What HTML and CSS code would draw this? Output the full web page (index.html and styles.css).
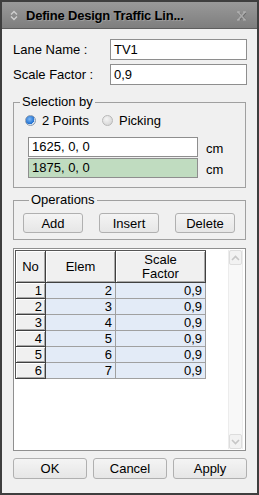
FILE: index.html
```html
<!DOCTYPE html>
<html lang="en">
    <head>
        <meta charset="UTF-8" />
        <title>Define Design Traffic Lane</title>
        <link rel="stylesheet" href="styles.css">
    </head>
    <body>
        <div class="window">
            <div class="titlebar">
                <svg class="title-icon" width="8" height="11" viewBox="0 0 8 11">
                    <path d="M1 4.5 L4 1.5 L7 4.5 M1 6.5 L4 9.5 L7 6.5" fill="none" stroke="#cfcfcf" stroke-width="1.4" />
                </svg>
                <span class="title">Define Design Traffic Lin...</span>
                <svg class="close" width="11" height="10" viewBox="0 0 11 10">
                    <path d="M2 1 L9 9 M9 1 L2 9" stroke="#6a6a6a" stroke-width="2.2" transform="translate(0.5 0.5)" />
                    <path d="M2 1 L9 9 M9 1 L2 9" stroke="#a9a9a9" stroke-width="1.8" />
                    <path d="M1 1 H4 M7 1 H10 M1 9 H4 M7 9 H10" stroke="#b8b8b8" stroke-width="1" />
                </svg>
            </div>
            <div class="content">
                <div class="field-row">
                    <span class="field-label">Lane Name :</span>
                    <div class="text-box">TV1</div>
                </div>
                <div class="field-row">
                    <span class="field-label">Scale Factor :</span>
                    <div class="text-box">0,9</div>
                </div>

                <fieldset class="group selection">
                    <legend>Selection by</legend>
                    <div class="radios">
                        <span class="radio-option"><span class="radio checked"></span>2 Points</span>
                        <span class="radio-option"><span class="radio"></span>Picking</span>
                    </div>
                    <div class="point-rows">
                        <div class="point-row">
                            <div class="text-box point">1625, 0, 0</div>
                            <span class="unit">cm</span>
                        </div>
                        <div class="point-row">
                            <div class="text-box point picked">1875, 0, 0</div>
                            <span class="unit">cm</span>
                        </div>
                    </div>
                </fieldset>

                <fieldset class="group ops">
                    <legend>Operations</legend>
                    <div class="op-buttons">
                        <button class="btn">Add</button>
                        <button class="btn">Insert</button>
                        <button class="btn">Delete</button>
                    </div>
                </fieldset>

                <div class="grid-box">
                    <div class="grid">
                        <div class="head">No</div>
                        <div class="head">Elem</div>
                        <div class="head">Scale<br>Factor</div>

                        <div class="num">1</div><div class="cell">2</div><div class="cell">0,9</div>
                        <div class="num">2</div><div class="cell">3</div><div class="cell">0,9</div>
                        <div class="num">3</div><div class="cell">4</div><div class="cell">0,9</div>
                        <div class="num">4</div><div class="cell">5</div><div class="cell">0,9</div>
                        <div class="num">5</div><div class="cell">6</div><div class="cell">0,9</div>
                        <div class="num">6</div><div class="cell">7</div><div class="cell">0,9</div>
                    </div>
                    <div class="scrollbar">
                        <div class="scroll-btn">
                            <svg width="9" height="6" viewBox="0 0 9 6"><path d="M1 5 L4.5 1.5 L8 5" fill="none" stroke="#c6c6c6" stroke-width="1.6" /></svg>
                        </div>
                        <div class="scroll-track"></div>
                        <div class="scroll-btn">
                            <svg width="9" height="6" viewBox="0 0 9 6"><path d="M1 1 L4.5 4.5 L8 1" fill="none" stroke="#c6c6c6" stroke-width="1.6" /></svg>
                        </div>
                    </div>
                </div>

                <div class="dialog-buttons">
                    <button class="btn">OK</button>
                    <button class="btn">Cancel</button>
                    <button class="btn">Apply</button>
                </div>
            </div>
        </div>
    </body>
</html>
```

FILE: styles.css
```css
body {
    margin: 0;
    font-family: "Liberation Sans", Arial, sans-serif;
    font-size: 13px;
    color: #000;
}
.window {
    width: 259px;
    height: 495px;
    box-sizing: border-box;
    border: 2px solid #3e3e3e;
    background: #f0f0f0;
    display: flex;
    flex-direction: column;
}

/* title bar */
.titlebar {
    height: 26px;
    border-bottom: 1px solid #5e5e5e;
    background: linear-gradient(#999, #8d8d8d 45%, #7e7e7e);
    display: flex;
    align-items: center;
    padding: 0 10px 0 8px;
}
.title-icon {
    margin-top: 1px;
}
.title {
    margin-left: 8px;
    font-weight: bold;
    font-size: 13px;
    letter-spacing: -0.2px;
    text-shadow: 1px 1px 0 rgba(255, 255, 255, 0.2);
}
.close {
    margin-left: auto;
    margin-top: 2px;
}

.content {
    padding: 10px 10px 0 11px;
}
.field-row {
    display: flex;
    align-items: center;
    height: 21px;
}
.field-row + .field-row {
    margin-top: 4px;
}
.field-label {
    width: 97px;
}
.text-box {
    flex: 1;
    height: 21px;
    box-sizing: border-box;
    border: 1px solid #8e8e8e;
    background: #fff;
    padding: 0 3px;
    line-height: 19px;
}

/* group boxes */
.group {
    margin: 0 1px 0 0;
    padding: 0;
    border: 1px solid #a0a0a0;
    min-width: 0;
}
.group legend {
    margin-left: 6px;
    padding: 0 2px;
    line-height: 14px;
}
.selection {
    margin-top: 10px;
    padding: 4px 0 9px 0;
}
.radios {
    display: flex;
    align-items: center;
    height: 14px;
    padding-left: 11px;
}
.radio-option {
    display: flex;
    align-items: center;
    gap: 6px;
}
.radio-option + .radio-option {
    margin-left: 13px;
}
.radio {
    width: 11px;
    height: 11px;
    box-sizing: border-box;
    border-radius: 50%;
    border: 1px solid #b8b8b8;
    background: radial-gradient(circle at 40% 35%, #f4f4f4, #cfcfcf);
}
.radio.checked {
    border-color: #8a9bb0;
    background: radial-gradient(circle at 40% 35%, #7db8f5, #1f6fd0 60%, #d8e2ee 62%);
}
.point-rows {
    margin-top: 10px;
    padding-left: 14px;
    display: flex;
    flex-direction: column;
    gap: 1px;
}
.point-row {
    display: flex;
    align-items: center;
    gap: 8px;
}
.text-box.point {
    flex: none;
    width: 170px;
    height: 20px;
    line-height: 18px;
}
.text-box.picked {
    background: #c0dcc0;
}
.unit {
    margin-top: 3px;
}

.ops {
    margin-top: 5px;
    padding: 6px 10px 6px 9px;
}
.op-buttons {
    display: flex;
    justify-content: space-between;
}
.btn {
    height: 20px;
    width: 60px;
    box-sizing: border-box;
    border: 1px solid #b0b0b0;
    border-radius: 3px;
    background: linear-gradient(#f4f4f4, #e6e6e6);
    font-family: inherit;
    font-size: 13px;
    color: #000;
    padding: 0;
}

/* table */
.grid-box {
    margin: 8px 1px 0 0;
    height: 203px;
    box-sizing: border-box;
    border: 1px solid #8f8f8f;
    background: #fff;
    padding: 1px 2px 1px 1px;
    display: flex;
    justify-content: space-between;
}
.grid {
    display: grid;
    grid-template-columns: 30px 70px 90px;
    grid-template-rows: 32px;
    grid-auto-rows: 16px;
    align-self: flex-start;
    border-top: 1px solid #555;
    border-left: 1px solid #555;
}
.head,
.num {
    background: #f0f0f0;
    border-right: 1px solid #404040;
    border-bottom: 1px solid #404040;
    box-shadow: inset 1px 1px #fff, inset -1px -1px #a8a8a8;
}
.head {
    display: flex;
    align-items: center;
    justify-content: center;
    text-align: center;
    line-height: 14px;
}
.num,
.cell {
    text-align: right;
    padding-right: 3px;
    line-height: 15px;
}
.cell {
    background: #e3ebf7;
    border-right: 1px solid #a0a0a0;
    border-bottom: 1px solid #a0a0a0;
}

.scrollbar {
    width: 15px;
    display: flex;
    flex-direction: column;
    box-sizing: border-box;
    border-left: 1px solid #ececec;
    border-right: 1px solid #ececec;
    background: #f8f8f8;
}
.scroll-btn {
    height: 15px;
    box-sizing: border-box;
    border: 1px solid #dddddd;
    border-radius: 2px;
    background: #f2f2f2;
    display: flex;
    align-items: center;
    justify-content: center;
}
.scroll-track {
    flex: 1;
}

.dialog-buttons {
    margin-top: 7px;
    display: grid;
    grid-template-columns: repeat(3, 1fr);
    gap: 6px;
}
.dialog-buttons .btn {
    width: auto;
    height: 21px;
}
```
